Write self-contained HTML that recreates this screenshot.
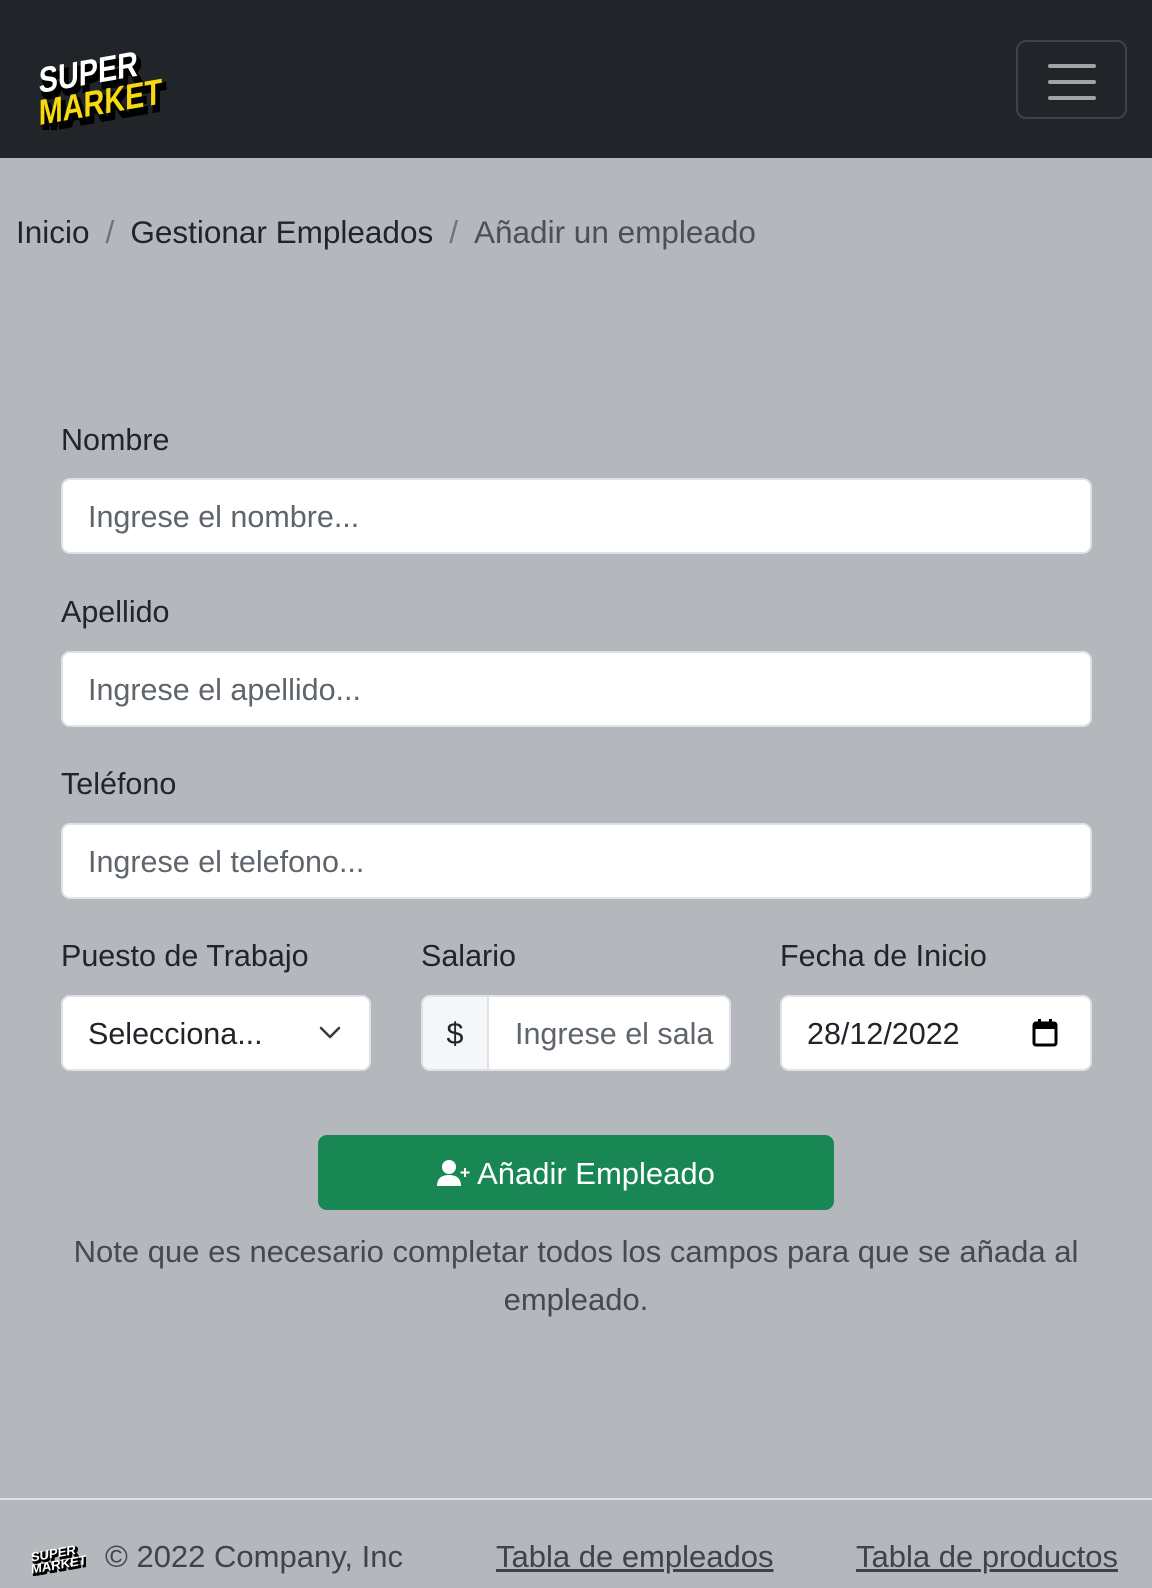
<!DOCTYPE html>
<html><head><meta charset="utf-8"><style>
*{box-sizing:border-box;margin:0;padding:0}
body{width:1152px;height:1588px;background:#b4b7bc;font-family:"Liberation Sans","DejaVu Sans",sans-serif;color:#212529;position:relative;overflow:hidden}
.nav{position:absolute;left:0;top:0;width:1152px;height:158px;background:#212529}
.tog{position:absolute;left:1016px;top:40px;width:111px;height:79px;border:2px solid #3f4349;border-radius:10px}
.tog i{position:absolute;left:30px;width:48px;height:4px;border-radius:2px;background:#a3a4a6}
.a{position:absolute;white-space:nowrap}
.bc{top:214px;left:16px;font-size:31.5px;color:#212529}
.bc span{color:#6c757d;padding:0 16px}
.bc .act{color:#4b5058;padding:0}
.lbl{font-size:30.5px;color:#212529}
.in{position:absolute;background:#fff;border:2px solid #dee2e6;border-radius:9px;height:76px;font-size:30.5px;color:#5f656c;padding-left:25px;line-height:74px;overflow:hidden;white-space:nowrap}
.btn{position:absolute;left:318px;top:1135px;width:516px;height:75px;background:#198754;border-radius:9px;color:#fff;font-size:31px;text-align:center;line-height:77px}
.note{position:absolute;left:30px;width:1092px;top:1228px;text-align:center;font-size:31px;line-height:48px;color:#454a51}
.foot{position:absolute;top:1498px;left:0;width:1152px;height:2px;background:#dee2e6}
.fl{font-size:31px;color:#3f444b;top:1539px}
.fl u{text-decoration:underline}
</style></head><body>
<div class="nav">
<svg style="position:absolute;left:34px;top:30px" width="150" height="100" viewBox="0 0 150 100">
<g transform="skewY(-10) translate(0,18)">
<text x="10" y="52" font-family="Liberation Sans" font-weight="bold" font-size="36" fill="#000" transform="scale(0.8,1)" stroke="#000" stroke-width="4">SUPER</text>
<text x="10" y="84" font-family="Liberation Sans" font-weight="bold" font-size="36" fill="#000" transform="scale(0.8,1)" stroke="#000" stroke-width="4">MARKET</text>
<text x="6" y="46" font-family="Liberation Sans" font-weight="bold" font-size="36" fill="#fff" transform="scale(0.8,1)">SUPER</text>
<text x="6" y="78" font-family="Liberation Sans" font-weight="bold" font-size="36" fill="#f6d90f" transform="scale(0.8,1)">MARKET</text>
</g></svg>
<div class="tog"><i style="top:22px"></i><i style="top:38px"></i><i style="top:54px"></i></div>
</div>
<div class="a bc">Inicio<span>/</span>Gestionar Empleados<span>/</span><b class="act" style="font-weight:normal">Añadir un empleado</b></div>

<div class="a lbl" style="left:61px;top:423px">Nombre</div>
<div class="in" style="left:61px;top:478px;width:1031px">Ingrese el nombre...</div>
<div class="a lbl" style="left:61px;top:595px">Apellido</div>
<div class="in" style="left:61px;top:651px;width:1031px">Ingrese el apellido...</div>
<div class="a lbl" style="left:61px;top:767px">Teléfono</div>
<div class="in" style="left:61px;top:823px;width:1031px">Ingrese el telefono...</div>

<div class="a lbl" style="left:61px;top:939px">Puesto de Trabajo</div>
<div class="in" style="left:61px;top:995px;width:310px;color:#212529">Selecciona...
<svg style="position:absolute;right:28px;top:28px" width="22" height="16" viewBox="0 0 22 16"><path d="M2 3l9 9 9-9" fill="none" stroke="#343a40" stroke-width="2.5" stroke-linecap="round" stroke-linejoin="round"/></svg></div>
<div class="a lbl" style="left:421px;top:939px">Salario</div>
<div class="in" style="left:421px;top:995px;width:310px;padding-left:92px">Ingrese el sala
<div style="position:absolute;left:0;top:0;width:66px;height:72px;background:#f5f6f8;border-right:2px solid #dee2e6;color:#212529;text-align:center">$</div></div>
<div class="a lbl" style="left:780px;top:939px">Fecha de Inicio</div>
<div class="in" style="left:780px;top:995px;width:312px;color:#212529">28/12/2022
<svg style="position:absolute;right:32px;top:22px" width="26" height="28" viewBox="0 0 26 28"><rect x="2" y="4" width="22" height="22" rx="2" fill="none" stroke="#000" stroke-width="3"/><rect x="2" y="4" width="22" height="6" fill="#000"/><rect x="6" y="0" width="3" height="6" fill="#000"/><rect x="17" y="0" width="3" height="6" fill="#000"/></svg></div>

<div class="btn"><svg width="34" height="28" viewBox="0 0 34 28" style="vertical-align:-3px;margin-right:6px"><circle cx="12" cy="8" r="7" fill="#fff"/><path d="M0 27c0-8 5-11 12-11s12 3 12 11z" fill="#fff"/><path d="M28 9v9M23.5 13.5h9" stroke="#fff" stroke-width="2"/></svg>Añadir Empleado</div>
<div class="note">Note que es necesario completar todos los campos para que se añada al<br>empleado.</div>

<div class="foot"></div>
<svg style="position:absolute;left:30px;top:1538px" width="56" height="38" viewBox="0 0 56 38"><g transform="skewY(-10) translate(0,8)"><text x="3" y="18" font-family="Liberation Sans" font-weight="bold" font-size="13" fill="#000" stroke="#000" stroke-width="2">SUPER</text><text x="3" y="30" font-family="Liberation Sans" font-weight="bold" font-size="13" fill="#000" stroke="#000" stroke-width="2">MARKET</text><text x="1" y="16" font-family="Liberation Sans" font-weight="bold" font-size="13" fill="#fff">SUPER</text><text x="1" y="28" font-family="Liberation Sans" font-weight="bold" font-size="13" fill="#fff">MARKET</text></g></svg>
<div class="a fl" style="left:105px">© 2022 Company, Inc</div>
<div class="a fl" style="left:496px"><u>Tabla de empleados</u></div>
<div class="a fl" style="left:856px"><u>Tabla de productos</u></div>
</body></html>
